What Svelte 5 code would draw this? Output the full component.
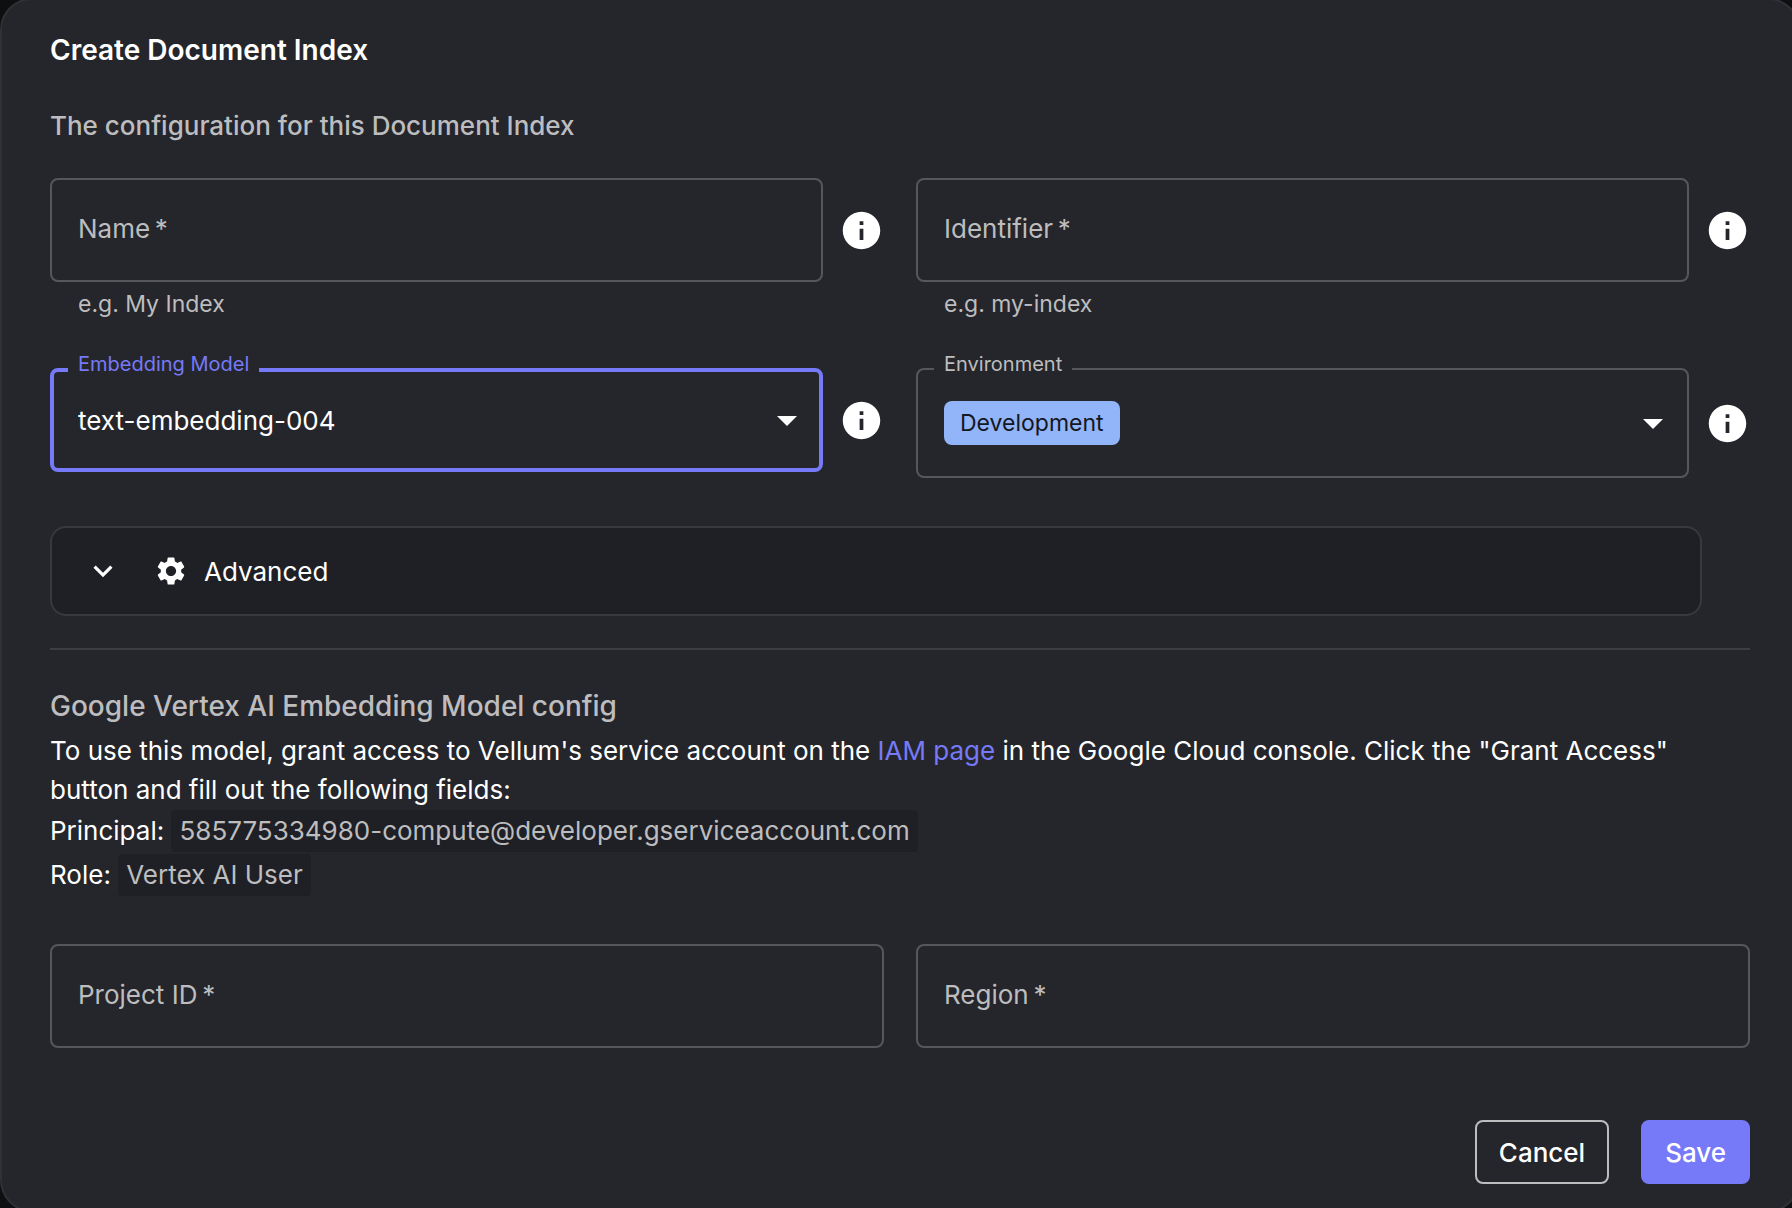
<script>
  let name = ''
  let identifier = ''
  let embeddingModel = 'text-embedding-004'
  let environment = 'Development'
  let projectId = ''
  let region = ''
</script>

{#snippet info(about)}
  <button type="button" class="info" aria-label={about}>
    <svg viewBox="0 0 24 24" aria-hidden="true">
      <path d="M12 2C6.48 2 2 6.48 2 12s4.48 10 10 10 10-4.48 10-10S17.52 2 12 2zm1 15h-2v-6h2v6zm0-8h-2V7h2v2z" />
    </svg>
  </button>
{/snippet}

{#snippet caret()}
  <svg class="caret" viewBox="0 0 24 24" aria-hidden="true">
    <path d="m7 10 5 5 5-5z" />
  </svg>
{/snippet}

<form class="dialog">
  <h1>Create Document Index</h1>
  <p class="intro">The configuration for this Document Index</p>

  <div class="grid">
    <div class="cell">
      <div class="row">
        <div class="field">
          <input id="name" type="text" required bind:value={name} />
          <label class="inside" for="name">Name&thinsp;*</label>
        </div>
        {@render info('About the name')}
      </div>
      <p class="helper">e.g. My Index</p>
    </div>
    <div class="cell">
      <div class="row">
        <div class="field">
          <input id="identifier" type="text" required bind:value={identifier} />
          <label class="inside" for="identifier">Identifier&thinsp;*</label>
        </div>
        {@render info('About the identifier')}
      </div>
      <p class="helper">e.g. my-index</p>
    </div>
    <div class="cell">
      <div class="row">
        <div class="field active">
          <label class="notch" for="model">Embedding Model</label>
          <select id="model" class="plain" bind:value={embeddingModel}>
            <option>text-embedding-004</option>
          </select>
          {@render caret()}
        </div>
        {@render info('About the embedding model')}
      </div>
    </div>
    <div class="cell">
      <div class="row">
        <div class="field tall">
          <label class="notch" for="environment">Environment</label>
          <select id="environment" class="chip" bind:value={environment}>
            <option>Development</option>
          </select>
          {@render caret()}
        </div>
        {@render info('About the environment')}
      </div>
    </div>
  </div>

  <button type="button" class="advanced" aria-expanded="false">
    <svg class="chevron" viewBox="0 0 24 24" aria-hidden="true">
      <path d="M16.59 8.59 12 13.17 7.41 8.59 6 10l6 6 6-6z" />
    </svg>
    <svg class="gear" viewBox="0 0 24 24" aria-hidden="true">
      <path d="M19.14 12.94c.04-.3.06-.61.06-.94 0-.32-.02-.64-.07-.94l2.03-1.58c.18-.14.23-.41.12-.61l-1.92-3.32c-.12-.22-.37-.29-.59-.22l-2.39.96c-.5-.38-1.03-.7-1.62-.94l-.36-2.54c-.04-.24-.24-.41-.48-.41h-3.84c-.24 0-.43.17-.47.41l-.36 2.54c-.59.24-1.13.57-1.62.94l-2.39-.96c-.22-.08-.47 0-.59.22L2.74 8.87c-.12.21-.08.47.12.61l2.03 1.58c-.05.3-.09.63-.09.94s.02.64.07.94l-2.03 1.58c-.18.14-.23.41-.12.61l1.92 3.32c.12.22.37.29.59.22l2.39-.96c.5.38 1.03.7 1.62.94l.36 2.54c.05.24.24.41.48.41h3.84c.24 0 .44-.17.47-.41l.36-2.54c.59-.24 1.13-.56 1.62-.94l2.39.96c.22.08.47 0 .59-.22l1.92-3.32c.12-.22.07-.47-.12-.61l-2.01-1.58zM12 15.6c-1.98 0-3.6-1.62-3.6-3.6s1.62-3.6 3.6-3.6 3.6 1.62 3.6 3.6-1.62 3.6-3.6 3.6z" />
    </svg>
    <span>Advanced</span>
  </button>

  <hr />

  <section>
    <h2>Google Vertex AI Embedding Model config</h2>
    <p>
      To use this model, grant access to Vellum's service account on the
      <a href="#iam">IAM page</a> in the Google Cloud console. Click the "Grant Access"
      button and fill out the following fields:
    </p>
    <div class="value">Principal: <code>585775334980-compute@developer.gserviceaccount.com</code></div>
    <div class="value">Role: <code>Vertex AI User</code></div>
  </section>

  <div class="grid">
    <div class="field">
      <input id="project" type="text" required bind:value={projectId} />
      <label class="inside" for="project">Project ID&thinsp;*</label>
    </div>
    <div class="field">
      <input id="region" type="text" required bind:value={region} />
      <label class="inside" for="region">Region&thinsp;*</label>
    </div>
  </div>

  <div class="actions">
    <button type="button" class="cancel">Cancel</button>
    <button type="submit" class="save">Save</button>
  </div>
</form>

<style>
  :global(body) {
    background: #0e0f10;
    overflow: hidden;
  }

  .dialog {
    box-sizing: border-box;
    margin: -2px -8px 0 0;
    padding: 32px 48px 26px;
    border: 2px solid #303136;
    border-radius: 32px;
    background: #25262b;
    color: #fff;
    font-family: Inter, "Liberation Sans", sans-serif;
    font-size: 26px;
    line-height: 39px;
  }

  h1,
  h2,
  p {
    margin: 0;
  }

  h1 {
    font-size: 28px;
    font-weight: 600;
    line-height: 36px;
  }

  h2 {
    margin-bottom: 3px;
    color: #bdbdbf;
    font-size: 28px;
    font-weight: 500;
    line-height: 44px;
  }

  button,
  input,
  select {
    color: inherit;
    font: inherit;
  }

  svg {
    display: block;
    flex: none;
    fill: currentColor;
  }

  .intro {
    margin: 38px 0 33px;
    color: #bdbdbf;
    font-weight: 500;
  }

  .grid {
    display: grid;
    grid-template-columns: 1fr 1fr;
    column-gap: 32px;
    align-items: start;
  }

  .row {
    display: flex;
    align-items: center;
    gap: 16px;
  }

  .field {
    position: relative;
    display: flex;
    flex: 1;
    align-items: center;
    box-sizing: border-box;
    height: 104px;
    border: 2px solid #56575b;
    border-radius: 8px;
  }

  .field.active {
    border: 4px solid #767af8;
  }

  .field.tall {
    height: 110px;
  }

  .field input {
    box-sizing: border-box;
    width: 100%;
    height: 100%;
    padding: 0 26px;
    border: 0;
    outline: 0;
    background: none;
  }

  .inside {
    position: absolute;
    left: 26px;
    padding-bottom: 4px;
    color: #bdbdbf;
    pointer-events: none;
  }

  .notch {
    position: absolute;
    top: -20px;
    left: 16px;
    padding: 0 10px;
    background: #25262b;
    color: #bdbdbf;
    font-size: 20px;
    line-height: 28px;
  }

  .active .notch {
    top: -22px;
    left: 14px;
    color: #767af8;
  }

  select {
    appearance: none;
    border: 0;
    outline: 0;
    background: none;
  }

  .plain {
    width: 100%;
    height: 100%;
    padding: 0 24px;
  }

  .chip {
    field-sizing: content;
    height: 44px;
    margin-left: 26px;
    padding: 0 16px;
    border-radius: 8px;
    background: #92b4f9;
    color: #131722;
    font-size: 23px;
  }

  .caret {
    position: absolute;
    right: 10px;
    width: 48px;
    height: 48px;
    pointer-events: none;
  }

  .active .caret {
    right: 8px;
  }

  .info {
    flex: none;
    padding: 0;
    border: 0;
    background: none;
  }

  .info svg {
    width: 45px;
    height: 45px;
  }

  .helper {
    margin: 4px 28px 46px;
    color: #bdbdbf;
    font-size: 23px;
    line-height: 36px;
  }

  .advanced {
    display: flex;
    align-items: center;
    box-sizing: border-box;
    width: calc(100% - 48px);
    height: 90px;
    margin: 48px 0 32px;
    padding: 0 32px;
    border: 2px solid #38393d;
    border-radius: 16px;
    background: #1f2025;
    text-align: left;
  }

  .chevron {
    width: 38px;
    height: 38px;
  }

  .gear {
    width: 34px;
    height: 34px;
    margin: 0 16px 0 32px;
  }

  hr {
    height: 2px;
    margin: 0 0 34px;
    border: 0;
    background: #3d3e42;
  }

  a {
    color: #767af8;
    text-decoration: none;
  }

  .value {
    line-height: 44px;
  }

  code {
    display: inline-block;
    padding: 0 8px;
    border-radius: 4px;
    background: #1f2025;
    color: #bdbdbf;
    font-family: inherit;
    line-height: 42px;
  }

  section {
    margin-bottom: 47px;
  }

  .actions {
    display: flex;
    justify-content: flex-end;
    gap: 32px;
    margin-top: 72px;
  }

  .actions button {
    box-sizing: border-box;
    height: 64px;
    padding: 0 22px;
    border: 2px solid #767af8;
    border-radius: 8px;
    background: #767af8;
    font-weight: 500;
  }

  .actions .cancel {
    border-color: #bdbdbf;
    background: none;
  }
</style>
